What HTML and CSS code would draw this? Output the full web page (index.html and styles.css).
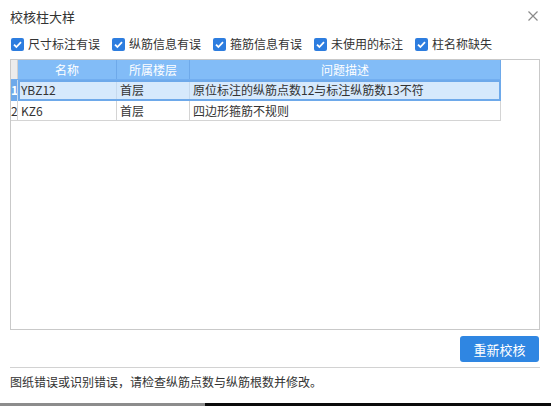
FILE: index.html
```html
<!DOCTYPE html>
<html lang="zh-CN">
<head>
<meta charset="utf-8">
<title>校核柱大样</title>
<link rel="stylesheet" href="styles.css">
</head>
<body>
<div class="dialog">
  <div class="titlebar">
    <span class="title">校核柱大样</span>
    <svg class="close" width="10" height="10" viewBox="0 0 10 10"><path d="M0.5 0.5 L9.5 9.5 M9.5 0.5 L0.5 9.5" stroke="#8a8a8a" stroke-width="1.2" fill="none"/></svg>
  </div>
  <div class="filters">
    <label class="chk"><span class="box"><svg width="13" height="13" viewBox="0 0 13 13"><path d="M3 6.6 L5.4 9 L10 4.2" stroke="#fff" stroke-width="1.8" fill="none"/></svg></span>尺寸标注有误</label>
    <label class="chk"><span class="box"><svg width="13" height="13" viewBox="0 0 13 13"><path d="M3 6.6 L5.4 9 L10 4.2" stroke="#fff" stroke-width="1.8" fill="none"/></svg></span>纵筋信息有误</label>
    <label class="chk"><span class="box"><svg width="13" height="13" viewBox="0 0 13 13"><path d="M3 6.6 L5.4 9 L10 4.2" stroke="#fff" stroke-width="1.8" fill="none"/></svg></span>箍筋信息有误</label>
    <label class="chk"><span class="box"><svg width="13" height="13" viewBox="0 0 13 13"><path d="M3 6.6 L5.4 9 L10 4.2" stroke="#fff" stroke-width="1.8" fill="none"/></svg></span>未使用的标注</label>
    <label class="chk"><span class="box"><svg width="13" height="13" viewBox="0 0 13 13"><path d="M3 6.6 L5.4 9 L10 4.2" stroke="#fff" stroke-width="1.8" fill="none"/></svg></span>柱名称缺失</label>
  </div>
  <div class="gridbox">
    <div class="grid">
      <div class="row head">
        <div class="cell num"></div>
        <div class="cell c1">名称</div>
        <div class="cell c2">所属楼层</div>
        <div class="cell c3">问题描述</div>
      </div>
      <div class="row sel">
        <div class="cell num">1</div>
        <div class="cell c1">YBZ12</div>
        <div class="cell c2">首层</div>
        <div class="cell c3">原位标注的纵筋点数12与标注纵筋数13不符</div>
      </div>
      <div class="row">
        <div class="cell num">2</div>
        <div class="cell c1">KZ6</div>
        <div class="cell c2">首层</div>
        <div class="cell c3">四边形箍筋不规则</div>
      </div>
    </div>
  </div>
  <div class="actions">
    <button class="btn">重新校核</button>
  </div>
  <div class="footer">图纸错误或识别错误，请检查纵筋点数与纵筋根数并修改。</div>
</div>
<div class="taskbar"><span class="tb-left"></span><span class="tb-right"></span></div>
</body>
</html>
```

FILE: styles.css
```css
* { box-sizing: border-box; }
html, body { margin: 0; padding: 0; background: #ffffff; }
body {
  width: 551px;
  height: 406px;
  overflow: hidden;
  font-family: "Noto Sans CJK SC", "Microsoft YaHei", sans-serif;
  font-size: 12px;
  color: #333333;
}
.dialog {
  height: 403px;
  padding: 0 11px 0 10px;
  display: flex;
  flex-direction: column;
}
.titlebar {
  height: 32px;
  display: flex;
  align-items: center;
  justify-content: space-between;
}
.title {
  font-size: 13px;
  color: #333333;
}
.close { margin-right: 2px; margin-top: -1px; }
.filters {
  height: 27px;
  padding-bottom: 3px;
  display: flex;
  align-items: center;
  gap: 12px;
  padding-left: 1px;
}
.chk {
  display: flex;
  align-items: center;
  gap: 4px;
  line-height: 14px;
  color: #333333;
}
.box {
  width: 13px;
  height: 13px;
  border-radius: 2px;
  background: #2d7ddf;
  display: flex;
}
.gridbox {
  height: 271px;
  border: 1px solid #c9c9c9;
  flex: none;
}
.grid {
  width: 490px;
}
.row {
  display: flex;
  height: 20px;
  border-bottom: 1px solid #d4d4d4;
  position: relative;
}
.cell {
  height: 100%;
  line-height: 19px;
  padding-left: 3px;
  border-right: 1px solid #d4d4d4;
  white-space: nowrap;
  overflow: hidden;
}
.num { width: 7px; padding-left: 0; text-align: center; font-size: 12px; background: #ffffff; }
.c1 { width: 99px; }
.c2 { width: 73px; }
.c3 { width: 311px; }
.head { background: #82bcf7; border-bottom: 1px solid #72aef0; }
.head .cell { color: #ffffff; text-align: center; padding-left: 0; border-right-color: #6ea9ea; }
.head .num { background: #ececec; border-right-color: #d0d0d0; }
.sel { background: #d6e9fc; border-bottom: none; height: 21px; }
.sel .cell { border-right-color: #c5d9ee; line-height: 20px; }
.sel::after {
  content: "";
  position: absolute;
  left: 7px;
  right: 0;
  top: 0;
  bottom: 0;
  border: 2px solid #6ea9ea;
  pointer-events: none;
}
.sel .num { background: #6ea9ea; color: #ffffff; font-weight: bold; }
.actions {
  height: 38px;
  display: flex;
  justify-content: flex-end;
  align-items: center;
  padding-top: 1px;
  border-bottom: 1px solid #d2d2d2;
}
.btn {
  width: 79px;
  height: 26px;
  margin-right: 1px;
  border: none;
  border-radius: 3px;
  background: #2f86e2;
  color: #ffffff;
  font-family: "Noto Sans CJK SC", "Microsoft YaHei", sans-serif;
  font-size: 13px;
  padding: 0;
}
.footer {
  height: 27px;
  line-height: 27px;
  color: #333333;
}
.taskbar {
  height: 3px;
  display: flex;
}
.tb-left { width: 205px; background: #8c8c8c; }
.tb-right { flex: 1; background: #0a0a0a; }
```
